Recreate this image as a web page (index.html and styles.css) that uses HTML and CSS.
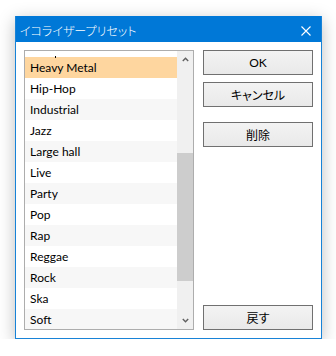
FILE: index.html
```html
<!DOCTYPE html>
<html lang="ja">
<head>
    <meta charset="UTF-8">
    <title>イコライザープリセット</title>
    <link rel="stylesheet" href="styles.css">
</head>
<body>
    <div class="window">
        <div class="titlebar">
            <span class="title">イコライザープリセット</span>
            <span class="close">
                <svg width="10" height="10" viewBox="0 0 10 10">
                    <path d="M0.5 0.5 L9.5 9.5 M9.5 0.5 L0.5 9.5" stroke="#fff" stroke-width="1.1" fill="none"/>
                </svg>
            </span>
        </div>

        <div class="content">
            <div class="listbox">
                <ul class="items">
                    <li class="partial"><span class="tick"></span></li>
                    <li class="selected">Heavy Metal</li>
                    <li>Hip-Hop</li>
                    <li>Industrial</li>
                    <li>Jazz</li>
                    <li>Large hall</li>
                    <li>Live</li>
                    <li>Party</li>
                    <li>Pop</li>
                    <li>Rap</li>
                    <li>Reggae</li>
                    <li>Rock</li>
                    <li>Ska</li>
                    <li>Soft</li>
                </ul>
                <div class="scrollbar">
                    <div class="arrow">
                        <svg width="7" height="5" viewBox="0 0 7 5">
                            <path d="M0.8 4 L3.5 1.2 L6.2 4" stroke="#606060" stroke-width="1.4" fill="none"/>
                        </svg>
                    </div>
                    <div class="track">
                        <div class="thumb"></div>
                    </div>
                    <div class="arrow">
                        <svg width="7" height="5" viewBox="0 0 7 5">
                            <path d="M0.8 1 L3.5 3.8 L6.2 1" stroke="#606060" stroke-width="1.4" fill="none"/>
                        </svg>
                    </div>
                </div>
            </div>

            <div class="buttons">
                <button class="btn btn-latin">OK</button>
                <button class="btn">キャンセル</button>
                <button class="btn btn-spaced">削除</button>
                <button class="btn btn-bottom">戻す</button>
            </div>
        </div>
    </div>
</body>
</html>
```

FILE: styles.css
```css
body {
    margin: 0;
    padding: 16px 0 0 15px;
    background: #fff;
    font-family: "Noto Sans CJK JP", sans-serif;
}

.window {
    width: 305px;
    border: 1px solid #1883d7;
    background: #fff;
    box-shadow: 0 4px 16px rgba(0, 0, 0, 0.26);
}

.titlebar {
    height: 25px;
    margin-top: -1px;
    padding-top: 1px;
    background: #0078d7;
    display: flex;
    align-items: center;
    justify-content: space-between;
}

.title {
    color: #fff;
    font-size: 12px;
    font-weight: 300;
    font-feature-settings: "palt";
    padding-left: 4px;
    margin-top: 1px;
}

.close {
    display: flex;
    width: 10px;
    height: 10px;
    margin-right: 10px;
    margin-top: 2px;
}

.content {
    display: flex;
    gap: 9px;
    padding: 8px;
}

.listbox {
    width: 168px;
    height: 278px;
    border: 1px solid #adadad;
    display: flex;
    overflow: hidden;
}

.items {
    list-style: none;
    margin: 0;
    padding: 0;
    flex: 1;
    font-family: Lato, "Liberation Sans", sans-serif;
    font-size: 12px;
    color: #000;
}

.items li {
    height: 21px;
    line-height: 21px;
    padding-left: 5px;
    background: #fff;
    white-space: nowrap;
}

.items li:nth-child(even) {
    background: #f7f7f7;
}

.items li.partial {
    margin-top: -15px;
    position: relative;
}

/* bottom of a letter from the row above, scrolled out of view */
.tick {
    position: absolute;
    left: 30px;
    bottom: -1px;
    width: 1px;
    height: 2px;
    background: #000;
}

.items li.selected {
    background: #fed69f;
}

.scrollbar {
    width: 16px;
    background: #f0f0f0;
    display: flex;
    flex-direction: column;
}

.arrow {
    height: 17px;
    display: flex;
    align-items: center;
    justify-content: center;
}

.track {
    flex: 1;
}

.thumb {
    margin-top: 85px;
    height: 128px;
    background: #cdcdcd;
}

.buttons {
    width: 110px;
    display: flex;
    flex-direction: column;
}

.btn {
    height: 25px;
    margin: 0 0 7px;
    padding: 0;
    border: 1px solid #707070;
    background: linear-gradient(#f3f3f3, #e9e9e9);
    font-family: "Noto Sans CJK JP", sans-serif;
    font-size: 12px;
    font-feature-settings: "palt";
    color: #000;
    line-height: 1;
}

.btn-latin {
    font-family: Lato, "Liberation Sans", sans-serif;
    font-size: 12px;
}

.btn-spaced {
    margin-top: 8px;
}

.btn-bottom {
    margin-top: auto;
    margin-bottom: 0;
}
```
